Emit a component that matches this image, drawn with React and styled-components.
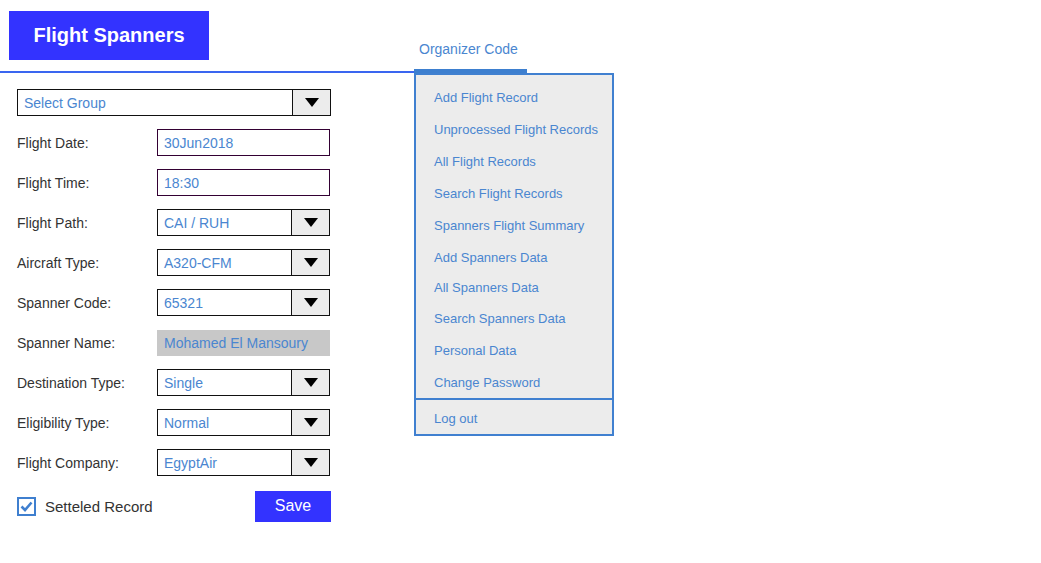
import React from 'react';
import styled, { createGlobalStyle } from 'styled-components'

const GlobalStyle = createGlobalStyle`
  body {
    margin: 0;
    background: #ffffff;
    font-family: "Liberation Sans", Arial, sans-serif;
  }
`

const fields = [
    {label: 'Flight Date:', value: '30Jun2018', kind: 'text'},
    {label: 'Flight Time:', value: '18:30', kind: 'text'},
    {label: 'Flight Path:', value: 'CAI / RUH', kind: 'select'},
    {label: 'Aircraft Type:', value: 'A320-CFM', kind: 'select'},
    {label: 'Spanner Code:', value: '65321', kind: 'select'},
    {label: 'Spanner Name:', value: 'Mohamed El Mansoury', kind: 'readonly'},
    {label: 'Destination Type:', value: 'Single', kind: 'select'},
    {label: 'Eligibility Type:', value: 'Normal', kind: 'select'},
    {label: 'Flight Company:', value: 'EgyptAir', kind: 'select'},
]

const menuItems = [
    'Add Flight Record',
    'Unprocessed Flight Records',
    'All Flight Records',
    'Search Flight Records',
    'Spanners Flight Summary',
    'Add Spanners Data',
    'All Spanners Data',
    'Search Spanners Data',
    'Personal Data',
    'Change Password',
]

const DropSelect = ({value, width}) => {
    return (
        <SelectBox $width={width}>
            <SelectValue>{value}</SelectValue>
            <SelectButton>
                <Triangle/>
            </SelectButton>
        </SelectBox>
    )
}

const App = () => {
    return (
        <Page>
            <GlobalStyle/>
            <LeftCol>
                <Header>
                    <Title>Flight Spanners</Title>
                </Header>
                <Form>
                    <DropSelect value="Select Group" width={314}/>
                    {fields.map((f) => (
                        <Row key={f.label}>
                            <Label>{f.label}</Label>
                            {f.kind === 'select' && <DropSelect value={f.value} width={173}/>}
                            {f.kind === 'text' && <TextBox>{f.value}</TextBox>}
                            {f.kind === 'readonly' && <ReadOnlyBox>{f.value}</ReadOnlyBox>}
                        </Row>
                    ))}
                    <Footer>
                        <CheckLabel>
                            <CheckBox>
                                <svg width="13" height="11" viewBox="0 0 13 11">
                                    <path d="M1.5 5.5 L5 9 L11.5 1.5" fill="none" stroke="#3f7fcf" strokeWidth="2.6"/>
                                </svg>
                            </CheckBox>
                            Setteled Record
                        </CheckLabel>
                        <SaveButton>Save</SaveButton>
                    </Footer>
                </Form>
            </LeftCol>
            <RightCol>
                <Tab>Organizer Code</Tab>
                <TabBar/>
                <Menu>
                    <MenuList>
                        {menuItems.map((item) => (
                            <MenuItem key={item} $short={item === 'All Spanners Data'}>{item}</MenuItem>
                        ))}
                    </MenuList>
                    <LogOut>Log out</LogOut>
                </Menu>
            </RightCol>
        </Page>
    );
};

const Page = styled.div`
  display: flex;
  width: 1041px;
  height: 563px;
  font-family: "Liberation Sans", Arial, sans-serif;
`

const LeftCol = styled.div`
  width: 414px;
  display: flex;
  flex-direction: column;
`

const Header = styled.div`
  height: 73px;
  border-bottom: 2px solid #3a66f0;
  padding: 11px 0 0 9px;
  box-sizing: border-box;
`

const Title = styled.div`
  width: 200px;
  height: 49px;
  background: #3333ff;
  color: #ffffff;
  font-weight: bold;
  font-size: 20px;
  display: flex;
  align-items: center;
  justify-content: center;
`

const Form = styled.div`
  padding: 16px 0 0 17px;
  display: flex;
  flex-direction: column;
  gap: 13px;
`

const Row = styled.div`
  display: flex;
  align-items: center;
  height: 27px;
`

const Label = styled.div`
  width: 140px;
  font-size: 14px;
  color: #333333;
`

const SelectBox = styled.div`
  width: ${p => p.$width}px;
  height: 27px;
  box-sizing: border-box;
  border: 1px solid #111111;
  display: flex;
  background: #ffffff;
`

const SelectValue = styled.div`
  flex: 1;
  display: flex;
  align-items: center;
  padding-left: 6px;
  font-size: 14px;
  color: #4a86d0;
`

const SelectButton = styled.div`
  width: 37px;
  border-left: 1px solid #111111;
  background: #ececec;
  display: flex;
  align-items: center;
  justify-content: center;
`

const Triangle = styled.div`
  width: 0;
  height: 0;
  border-left: 7px solid transparent;
  border-right: 7px solid transparent;
  border-top: 9px solid #000000;
`

const TextBox = styled.div`
  width: 173px;
  height: 27px;
  box-sizing: border-box;
  border: 1px solid #330033;
  padding-left: 6px;
  display: flex;
  align-items: center;
  font-size: 14px;
  color: #4a86d0;
`

const ReadOnlyBox = styled(TextBox)`
  border: none;
  height: 26px;
  padding-left: 7px;
  background: #c8c8c8;
`

const Footer = styled.div`
  display: flex;
  align-items: center;
  justify-content: space-between;
  width: 314px;
  margin-top: 2px;
`

const CheckLabel = styled.div`
  display: flex;
  align-items: center;
  gap: 9px;
  font-size: 15px;
  color: #333333;
`

const CheckBox = styled.div`
  width: 19px;
  height: 19px;
  box-sizing: border-box;
  border: 2px solid #3f7fcf;
  display: flex;
  align-items: center;
  justify-content: center;
`

const SaveButton = styled.button`
  width: 76px;
  height: 31px;
  border: none;
  background: #3333ff;
  color: #ffffff;
  font-family: "Liberation Sans", Arial, sans-serif;
  font-size: 16px;
  padding: 0 0 2px 0;
`

const RightCol = styled.div`
  display: flex;
  flex-direction: column;
  width: 200px;
`

const Tab = styled.div`
  height: 69px;
  box-sizing: border-box;
  padding: 41px 0 0 5px;
  font-size: 14px;
  color: #4a86d0;
`

const TabBar = styled.div`
  width: 113px;
  height: 4px;
  background: #3d7fcf;
`

const Menu = styled.div`
  width: 200px;
  box-sizing: border-box;
  border: 2px solid #4080d0;
  background: #ececec;
`

const MenuList = styled.div`
  padding: 6px 0 0 18px;
  border-bottom: 2px solid #4080d0;
`

const MenuItem = styled.div`
  height: ${p => p.$short ? 29 : 32}px;
  display: flex;
  align-items: center;
  font-size: 13px;
  color: #4a86d0;
`

const LogOut = styled.div`
  height: 34px;
  box-sizing: border-box;
  padding: 3px 0 0 18px;
  display: flex;
  align-items: center;
  font-size: 13px;
  color: #4a86d0;
`

export default App;
